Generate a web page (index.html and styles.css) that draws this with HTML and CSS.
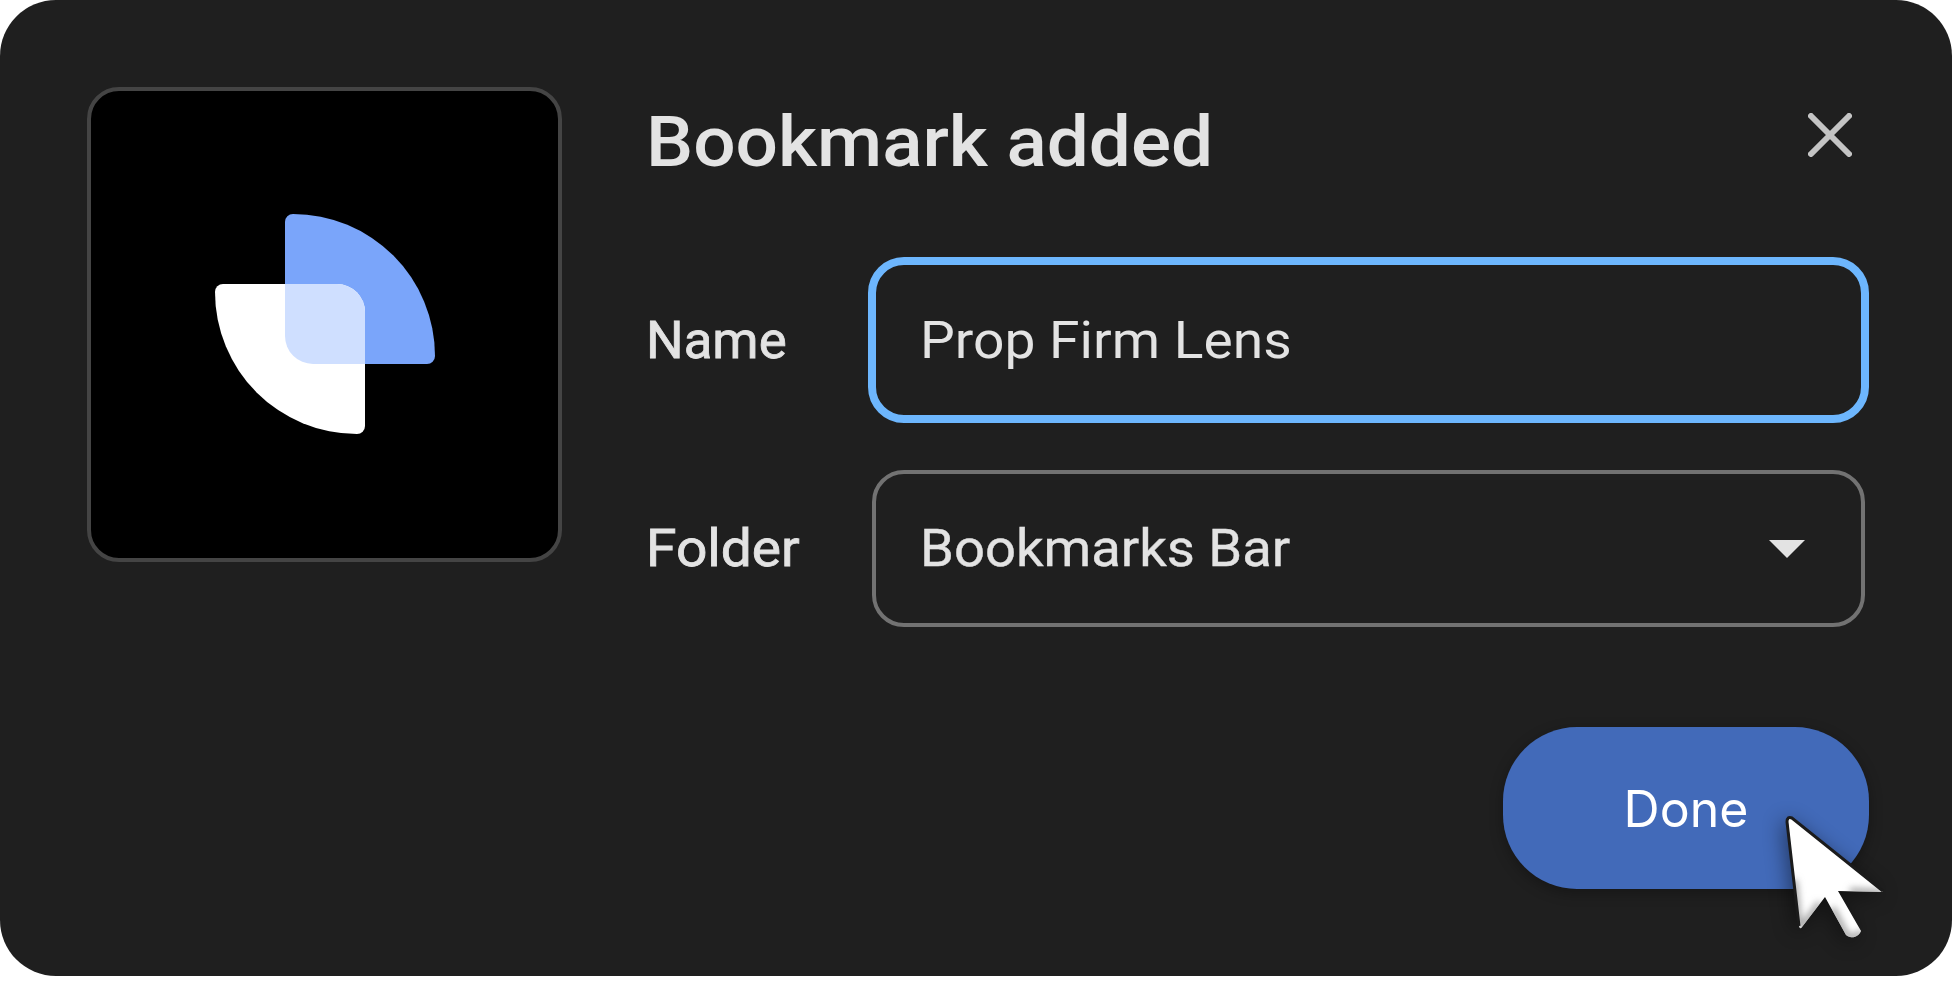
FILE: index.html
```html
<!DOCTYPE html>
<html lang="en">
<head>
<meta charset="utf-8">
<title>Bookmark added</title>
<link rel="stylesheet" href="styles.css">
</head>
<body>
<main class="card">
  <div class="thumb">
    <svg class="logo" viewBox="0 0 220 220" width="220" height="220" aria-hidden="true">
      <path fill="#7aa5fa" d="M70 8a8 8 0 0 1 8-8A142 142 0 0 1 220 142a8 8 0 0 1-8 8H98a28 28 0 0 1-28-28Z"/>
      <path fill="#fff" d="M0 78a8 8 0 0 1 8-8H122a28 28 0 0 1 28 28V212a8 8 0 0 1-8 8A142 142 0 0 1 0 78Z"/>
      <path fill="#cfdfff" d="M70 70H122a28 28 0 0 1 28 28V150H98a28 28 0 0 1-28-28Z"/>
    </svg>
  </div>
  <div class="panel">
    <header class="head">
      <h1 class="title">Bookmark added</h1>
      <svg class="close" viewBox="0 0 44 44" width="44" height="44" aria-hidden="true">
        <path d="M3 3L41 41M41 3L3 41" stroke="#c4c4c4" stroke-width="6" stroke-linecap="round" fill="none"/>
      </svg>
    </header>
    <div class="form">
      <div class="row">
        <span class="label label-name">Name</span>
        <div class="field field-focus"><span class="value value-name">Prop Firm Lens</span></div>
      </div>
      <div class="row">
        <span class="label label-folder">Folder</span>
        <div class="field">
          <span class="value value-folder">Bookmarks Bar</span>
          <span class="caret"></span>
        </div>
      </div>
    </div>
    <div class="actions">
      <button class="done"><span class="done-text">Done</span></button>
    </div>
  </div>
  <svg class="cursor" viewBox="0 0 130 155" width="130" height="155" aria-hidden="true">
    <defs>
      <clipPath id="cursorClip">
        <path d="M18 22Q17 17 22 19L113 92L68 91L91 131A9.5 9.5 0 0 1 76 135L55 97L32 127Q30 130 29 126Z"/>
      </clipPath>
      <filter id="cursorSoft" x="-20%" y="-20%" width="140%" height="140%">
        <feGaussianBlur stdDeviation="3.5"/>
      </filter>
    </defs>
    <path fill="#fff" d="M18 22Q17 17 22 19L113 92L68 91L91 131A9.5 9.5 0 0 1 76 135L55 97L32 127Q30 130 29 126Z"/>
    <g clip-path="url(#cursorClip)">
      <path fill="none" stroke="#9a9a9a" stroke-width="6" filter="url(#cursorSoft)" d="M29 127L24 80M113 93L80 91M91 131A9.5 9.5 0 0 1 76 135L62 108M50 103L32 127"/>
    </g>
    <path fill="none" stroke="#1b1b1b" stroke-width="3" d="M29 126L17 22Q17 16 22 18L113 91"/>
  </svg>
</main>
</body>
</html>
```
FILE: styles.css
```css
html, body {
  margin: 0;
  background: #fff;
}
.card {
  position: relative;
  box-sizing: border-box;
  width: 1952px;
  height: 976px;
  padding: 87px;
  display: flex;
  gap: 85px;
  align-items: flex-start;
  background: #1f1f1f;
  border-radius: 56px;
  font-family: Roboto, "Liberation Sans", sans-serif;
  color: #e3e3e3;
  overflow: hidden;
}
.thumb {
  box-sizing: border-box;
  flex: none;
  width: 475px;
  height: 475px;
  padding-bottom: 2px;
  display: flex;
  align-items: center;
  justify-content: center;
  background: #000;
  border: 4px solid #444;
  border-radius: 32px;
}
.panel {
  flex: 1;
  display: flex;
  flex-direction: column;
}
.head {
  height: 174px;
  display: flex;
  justify-content: space-between;
  align-items: flex-start;
}
.title {
  margin: 14px 0 0 -1px;
  font-size: 70px;
  line-height: 82px;
  font-weight: 500;
  transform: scaleX(1.068);
  transform-origin: left center;
  filter: blur(0.7px);
}
.close {
  margin: 26px 13px 0 0;
}
.form {
  display: flex;
  flex-direction: column;
  gap: 51px;
}
.row {
  display: flex;
  align-items: center;
}
.label {
  flex: none;
  width: 225px;
  margin-left: -1px;
  margin-right: 1px;
  font-size: 52px;
  font-weight: 400;
  -webkit-text-stroke: 0.8px #e3e3e3;
  transform-origin: left center;
  filter: blur(0.7px);
}
.label-name {
  transform: scaleX(1.015);
}
.label-folder {
  transform: scaleX(1.06);
}
.field {
  box-sizing: border-box;
  flex: 1;
  height: 157px;
  padding: 0 44px;
  display: flex;
  align-items: center;
  justify-content: space-between;
  font-size: 52px;
  border: 4px solid #727272;
  border-radius: 32px;
}
.field-focus {
  height: 166px;
  margin: -4px;
  border: 8px solid #6db6fd;
  border-radius: 36px;
}
.value {
  transform-origin: left center;
  filter: blur(0.35px);
}
.value-name {
  transform: scaleX(1.061);
}
.value-folder {
  transform: scaleX(1.046);
  -webkit-text-stroke: 0.4px #e3e3e3;
}
.caret {
  width: 0;
  height: 0;
  margin-right: 12px;
  border-left: 18px solid transparent;
  border-right: 18px solid transparent;
  border-top: 18px solid #e3e3e3;
}
.actions {
  margin-top: 100px;
  display: flex;
  justify-content: flex-end;
}
.done {
  width: 366px;
  height: 162px;
  margin-right: -4px;
  padding: 0;
  border: 0;
  border-radius: 74px;
  background: #426ab9;
  box-shadow: 0 4px 14px rgba(0, 0, 0, 0.3);
  color: #fff;
  font-family: Inter, Roboto, sans-serif;
  font-size: 50px;
}
.done-text {
  position: relative;
  top: 1px;
}
.cursor {
  position: absolute;
  left: 1770px;
  top: 800px;
  filter: drop-shadow(-3px 4px 10px rgba(0, 0, 0, 0.45));
}
```
